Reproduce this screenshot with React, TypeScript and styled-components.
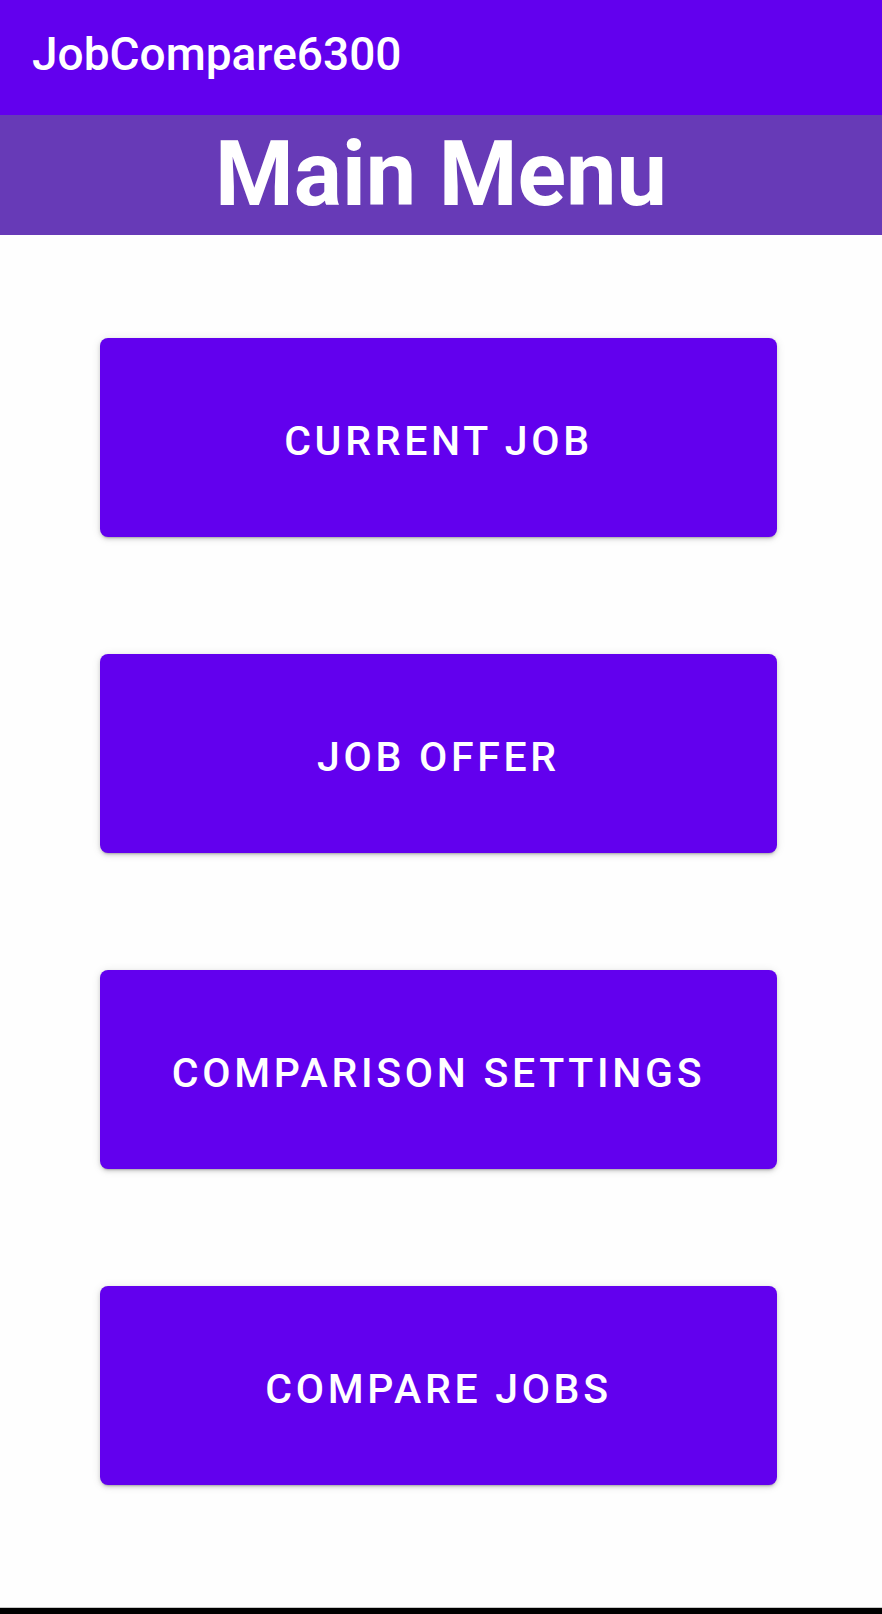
import React from "react";
import styled, { createGlobalStyle } from "styled-components";

const Global = createGlobalStyle`
  html, body { margin: 0; padding: 0; background: #ffffff; }
  body { font-family: Roboto, "Noto Sans", sans-serif; }
`;

const Screen = styled.div`
  width: 882px;
  height: 1614px;
  display: flex;
  flex-direction: column;
  background: #fefefe;
  overflow: hidden;
`;

const Toolbar = styled.header`
  height: 115px;
  flex: none;
  background: #6200ee;
  display: flex;
  align-items: center;
  padding: 0 0 8px 32px;
  box-sizing: border-box;
  color: #ffffff;
  font-size: 46px;
  font-weight: 500;
`;

const TitleBand = styled.div`
  height: 120px;
  flex: none;
  background: #673ab7;
  display: flex;
  align-items: center;
  justify-content: center;
  color: #ffffff;
  font-size: 90px;
  font-weight: 700;
  line-height: 1;
`;

const Menu = styled.main`
  flex: 1;
  display: flex;
  flex-direction: column;
  align-items: center;
  gap: 117px;
  padding: 103px 5px 0 0;
`;

const MenuButton = styled.button`
  width: 677px;
  height: 199px;
  border: none;
  border-radius: 8px;
  background: #6200ee;
  color: #ffffff;
  font-family: Roboto, "Noto Sans", sans-serif;
  font-size: 41px;
  font-weight: 500;
  letter-spacing: 3.7px;
  text-transform: uppercase;
  padding: 6px 0 0;
  box-shadow: 0 3px 2px -2px rgba(0, 0, 0, 0.2), 0 2px 4px rgba(0, 0, 0, 0.14),
    0 1px 10px rgba(0, 0, 0, 0.1);
  cursor: pointer;
`;

const NavBar = styled.div`
  height: 6px;
  flex: none;
  background: #000000;
  border-top: 1px solid #c8c8c8;
`;

const items = ["Current Job", "Job Offer", "Comparison Settings", "Compare Jobs"];

export default function App() {
  return (
    <>
      <Global />
      <Screen>
        <Toolbar>JobCompare6300</Toolbar>
        <TitleBand>Main Menu</TitleBand>
        <Menu>
          {items.map((label) => (
            <MenuButton key={label}>{label}</MenuButton>
          ))}
        </Menu>
        <NavBar />
      </Screen>
    </>
  );
}
